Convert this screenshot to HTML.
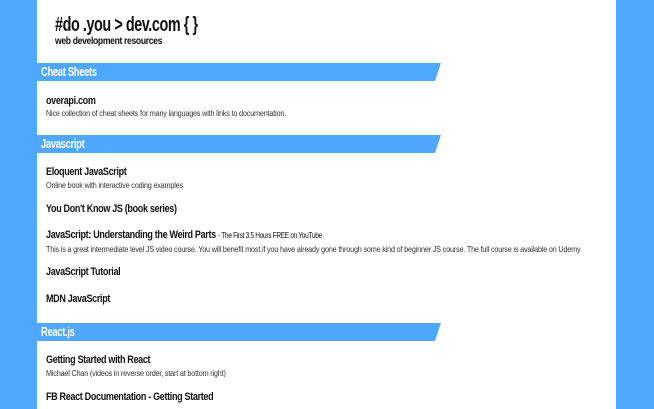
<!DOCTYPE html>
<html><head><style>
html,body{margin:0;padding:0;width:654px;height:409px;overflow:hidden;background:#4fa8fe;}
body{position:relative;font-family:"Liberation Sans",sans-serif;color:#111;}
.panel{position:absolute;left:37px;top:0;width:579px;height:409px;background:#fff;}
.t{position:absolute;white-space:nowrap;font-weight:bold;letter-spacing:-0.4px;transform-origin:0 0;}
.bar{position:absolute;left:37px;width:404px;height:18px;background:#4fa8fe;clip-path:polygon(0 0,100% 0,98.5% 100%,0 100%);}
.bar span{position:absolute;left:4px;top:2px;color:#fff;font-weight:bold;font-size:12.5px;letter-spacing:-0.4px;transform:scaleX(0.75);transform-origin:0 0;white-space:nowrap;}
.h{font-size:11px;left:46px;transform:scaleX(0.82);}
.d{font-size:7.8px;font-weight:normal;left:46px;color:#333;letter-spacing:-0.2px;transform:scaleX(0.93);}
</style></head><body>
<div class="panel"></div>
<div class="t" style="left:55px;top:14px;font-size:20px;letter-spacing:-0.6px;transform:scaleX(0.72);">#do .you &gt; dev.com { }</div>
<div class="t" style="left:55px;top:36px;font-size:10px;transform:scaleX(0.86);">web development resources</div>
<div class="bar" style="top:63px"><span>Cheat Sheets</span></div>
<div class="t h" style="top:95px">overapi.com</div>
<div class="t d" style="top:109px">Nice collection of cheat sheets for many languages with links to documentation.</div>
<div class="bar" style="top:135px"><span>Javascript</span></div>
<div class="t h" style="top:166px">Eloquent JavaScript</div>
<div class="t d" style="top:181px">Online book with interactive coding examples</div>
<div class="t h" style="top:203px">You Don't Know JS (book series)</div>
<div class="t h" style="top:229px">JavaScript: Understanding the Weird Parts <span style="font-weight:normal;font-size:8px">- The First 3.5 Hours FREE on YouTube</span></div>
<div class="t d" style="top:245px">This is a great intermediate level JS video course. You will benefit most if you have already gone through some kind of beginner JS course. The full course is available on Udemy</div>
<div class="t h" style="top:266px">JavaScript Tutorial</div>
<div class="t h" style="top:293px">MDN JavaScript</div>
<div class="bar" style="top:323px"><span>React.js</span></div>
<div class="t h" style="top:354px">Getting Started with React</div>
<div class="t d" style="top:369px">Michael Chan (videos in reverse order, start at bottom right)</div>
<div class="t h" style="top:391px">FB React Documentation - Getting Started</div>
</body></html>
